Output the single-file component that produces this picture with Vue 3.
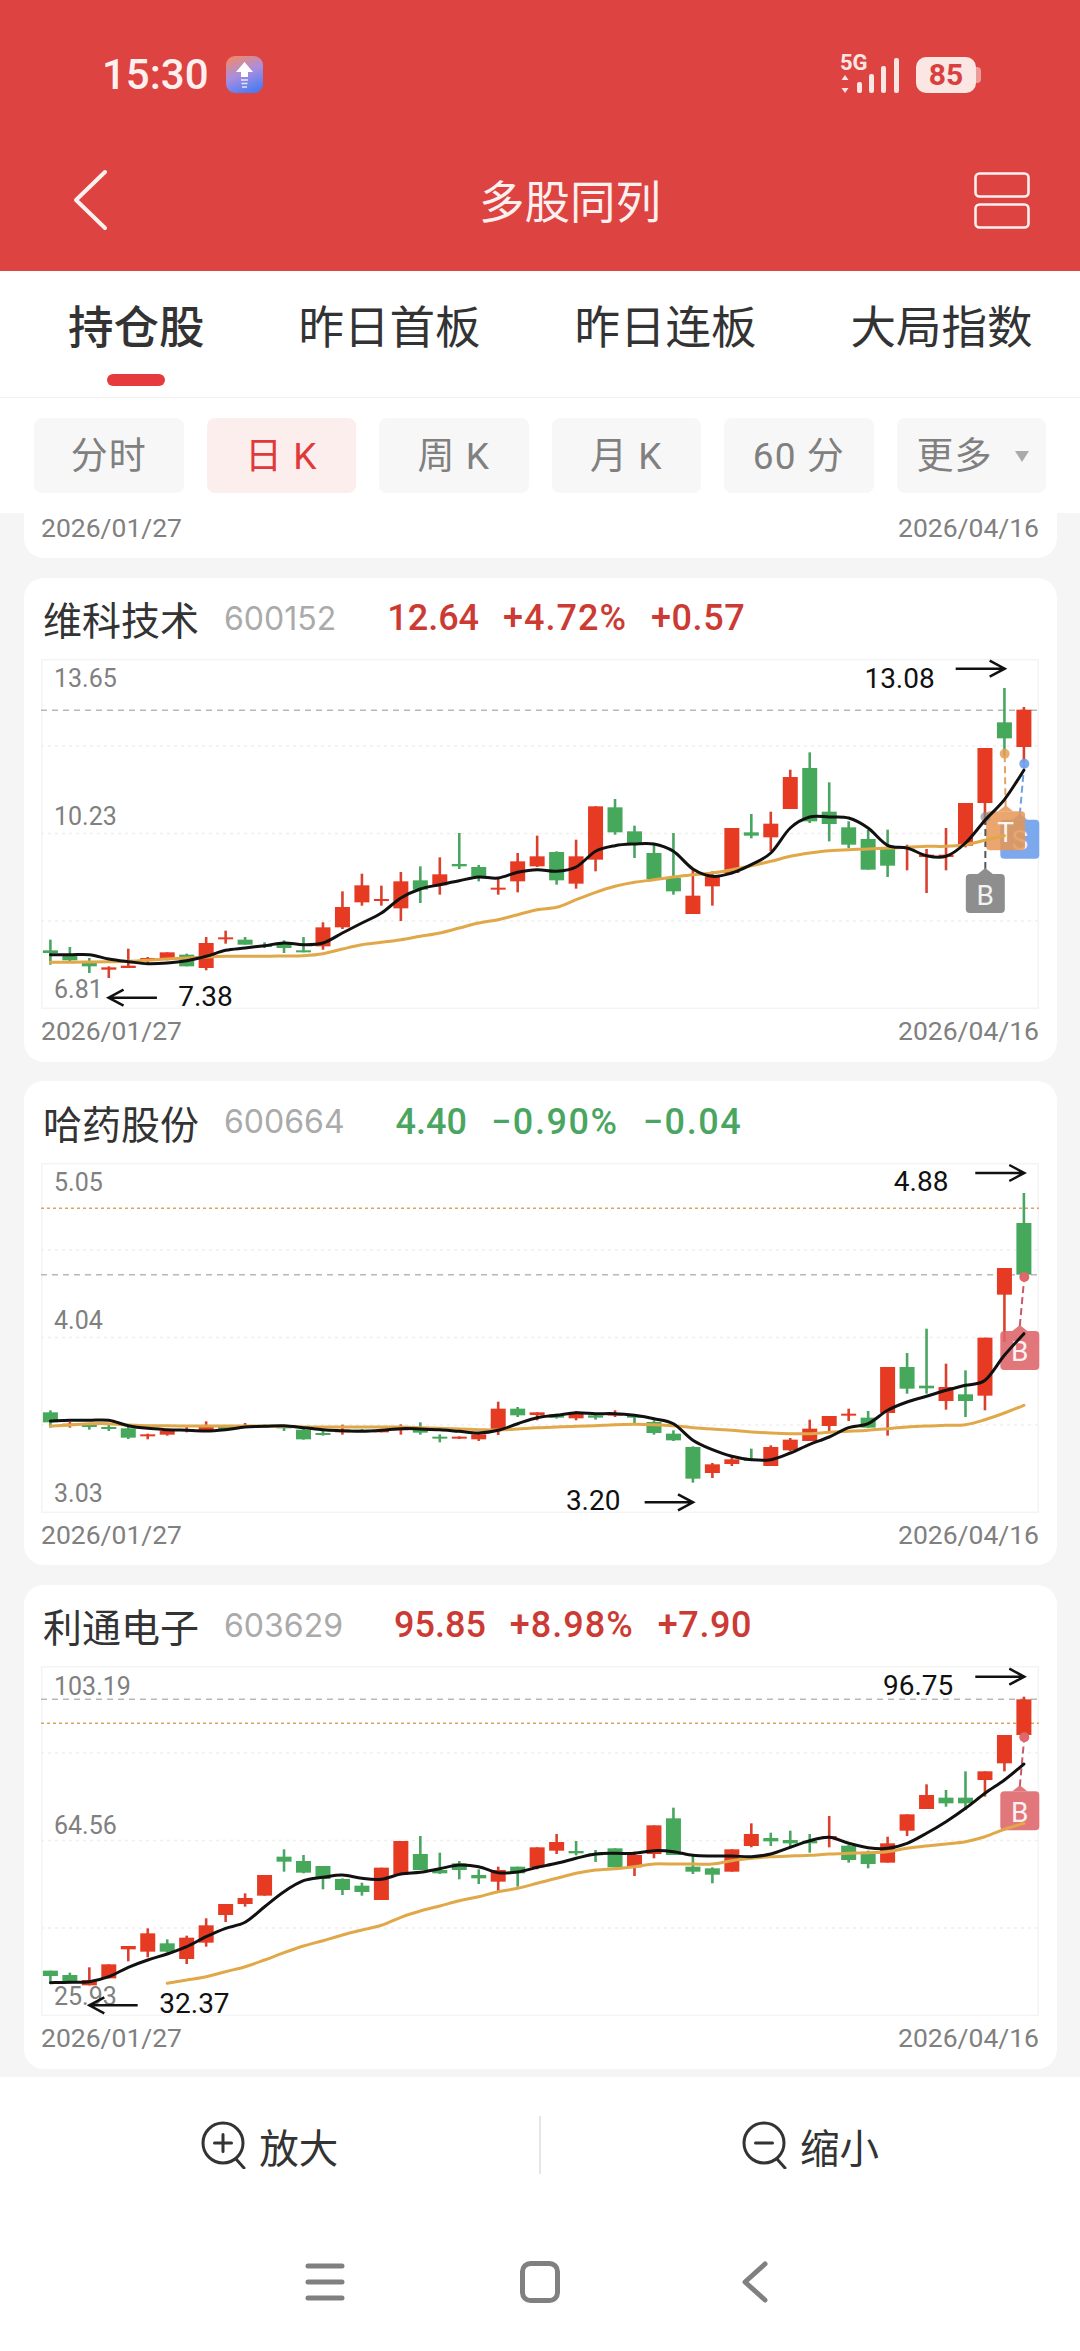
<script setup>
// chart data was read off the screenshot, y values are in crop coordinates (3x)
const lx = (z) => z / 2.958 - 21
const rx = (z) => z / 2.958 + 509
const candleX = (i) => 9.4 + 19.47 * i

function smooth(points) {
  let d = `M${points[0][0]} ${points[0][1]}`
  for (let i = 0; i < points.length - 1; i++) {
    const p0 = points[i - 1] || points[i]
    const p1 = points[i]
    const p2 = points[i + 1]
    const p3 = points[i + 2] || p2
    const c1x = p1[0] + (p2[0] - p0[0]) / 6
    const c1y = p1[1] + (p2[1] - p0[1]) / 6
    const c2x = p2[0] - (p3[0] - p1[0]) / 6
    const c2y = p2[1] - (p3[1] - p1[1]) / 6
    d += ` C${c1x.toFixed(1)} ${c1y.toFixed(1)} ${c2x.toFixed(1)} ${c2y.toFixed(1)} ${p2[0].toFixed(1)} ${p2[1].toFixed(1)}`
  }
  return d
}

function arrow(x1, x2, y) {
  const dir = x2 > x1 ? -1 : 1
  return `M${x1} ${y} L${x2} ${y} M${x2 + dir * 15} ${y - 8} L${x2} ${y} L${x2 + dir * 15} ${y + 8}`
}

function buildChart(raw) {
  const y = (z) => z / 3 - raw.offset
  return {
    ...raw,
    key: raw.code,
    grid: [87, 174.5, 262],
    refs: raw.refs.map((r) => ({ ...r, y: y(r.z) })),
    labels: raw.labels.map((l) => ({ text: l[0], y: y(l[1]) })),
    candles: raw.candles.map((c, i) => ({
      cls: c[0] === 'r' ? 'up' : 'down',
      x: candleX(i),
      top: y(c[1]),
      bodyTop: y(c[2]),
      bodyH: Math.max((c[3] - c[2]) / 3, 2),
      bottom: y(c[4])
    })),
    ma5Path: smooth(raw.ma5.map((v, i) => [candleX(i), y(v)])),
    ma10Path: smooth(raw.ma10.map((v, i) => [candleX(i + (raw.ma10Start || 0)), y(v)])),
    notes: raw.notes.map((n) => ({
      text: n.text,
      x: n.x,
      y: y(n.z),
      arrow: arrow(n.from, n.to, y(n.az))
    })),
    pins: raw.pins.map((p) => {
      const px = p.x
      const py = y(p.z)
      return {
        ...p,
        px,
        py,
        tip: `M${px + 12} ${py} L${px + 19.5} ${py - 6} L${px + 27} ${py} Z`,
        link: `M${px + 19.5} ${py - 5} L${p.toX} ${y(p.toZ)}`,
        dotY: y(p.toZ)
      }
    })
  }
}

const charts = [
  {
    name: '维科技术', code: '600152', price: '12.64', pct: '+4.72%', chg: '+0.57', trend: 'rise',
    offset: 79.33,
    refs: [{ z: 392, cls: 'ref-gray' }],
    labels: [['13.65', 295], ['10.23', 710], ['6.81', 1230]],
    candles: [
      ['g', 1080, 1112, 1120, 1155], ['g', 1102, 1125, 1142, 1145], ['g', 1135, 1150, 1160, 1180], ['r', 1160, 1163, 1170, 1195],
      ['r', 1107, 1158, 1165, 1165], ['r', 1132, 1135, 1140, 1150], ['r', 1118, 1118, 1140, 1142], ['g', 1122, 1125, 1160, 1160],
      ['r', 1072, 1090, 1165, 1172], ['r', 1053, 1073, 1079, 1092], ['g', 1072, 1080, 1095, 1095], ['g', 1088, 1096, 1100, 1105],
      ['g', 1082, 1092, 1105, 1120], ['g', 1072, 1112, 1116, 1118], ['r', 1028, 1043, 1100, 1110], ['r', 935, 982, 1043, 1048],
      ['r', 882, 917, 968, 978], ['r', 918, 958, 964, 978], ['r', 877, 905, 986, 1024], ['g', 860, 902, 930, 970],
      ['r', 833, 884, 917, 945], ['g', 760, 853, 860, 868], ['g', 856, 862, 890, 905], ['r', 895, 924, 928, 945],
      ['r', 820, 845, 905, 938], ['r', 768, 830, 860, 862], ['g', 815, 817, 902, 915], ['r', 780, 830, 912, 927],
      ['r', 680, 680, 840, 875], ['g', 658, 683, 758, 765], ['g', 738, 755, 790, 835], ['g', 795, 820, 898, 900],
      ['g', 760, 895, 935, 945], ['r', 870, 948, 1003, 1003], ['r', 875, 890, 920, 978], ['r', 745, 745, 880, 880],
      ['g', 703, 758, 768, 776], ['r', 696, 732, 773, 815], ['r', 570, 592, 688, 688], ['g', 518, 565, 725, 730],
      ['g', 608, 696, 733, 785], ['g', 725, 743, 795, 805], ['g', 750, 778, 870, 870], ['g', 750, 808, 858, 892],
      ['r', 795, 800, 806, 872], ['r', 808, 825, 832, 940], ['r', 745, 825, 832, 872], ['r', 670, 670, 798, 803],
      ['r', 505, 505, 670, 735], ['g', 325, 428, 476, 530], ['r', 382, 390, 502, 550]
    ],
    ma5: [1125, 1125, 1125, 1138, 1146, 1152, 1150, 1143, 1130, 1112, 1105, 1098, 1090, 1095, 1090, 1060, 1030, 1000, 955, 928, 915, 903, 892, 895, 878, 870, 875, 862, 815, 798, 793, 793, 815, 868, 890, 880, 855, 820, 745, 712, 712, 715, 745, 797, 805, 828, 830, 790, 722, 660, 572],
    ma10: [1148, 1148, 1147, 1146, 1145, 1142, 1138, 1135, 1132, 1130, 1130, 1130, 1129, 1128, 1122, 1108, 1095, 1088, 1080, 1070, 1060, 1045, 1030, 1020, 1005, 990, 983, 960, 938, 920, 908, 900, 892, 885, 880, 870, 858, 845, 830, 820, 813, 810, 808, 805, 803, 800, 800, 795, 782, 768],
    notes: [
      { text: '13.08', x: rx(930), z: 295, from: rx(1200), to: rx(1345), az: 267 },
      { text: '7.38', x: lx(468), z: 1250, from: lx(405), to: lx(262), az: 1254 }
    ],
    pins: [
      { text: 'S', cls: 'pin-blue', x: rx(1332), z: 720, toX: rx(1403), toZ: 552 },
      { text: 'T', cls: 'pin-orange', x: rx(1290), z: 695, toX: rx(1345), toZ: 522 },
      { text: 'B', cls: 'pin-gray', x: rx(1230), z: 883, toX: rx(1288), toZ: 712 }
    ]
  },
  {
    name: '哈药股份', code: '600664', price: '4.40', pct: '−0.90%', chg: '−0.04', trend: 'fall',
    offset: 82.67,
    refs: [{ z: 384, cls: 'ref-gold' }, { z: 583, cls: 'ref-gray' }],
    labels: [['5.05', 308], ['4.04', 722], ['3.03', 1240]],
    candles: [
      ['g', 990, 996, 1026, 1042], ['r', 1025, 1030, 1035, 1042], ['g', 1028, 1034, 1037, 1048], ['g', 1030, 1040, 1044, 1052],
      ['g', 1040, 1044, 1072, 1076], ['r', 1060, 1062, 1066, 1077], ['r', 1050, 1052, 1063, 1066], ['r', 1040, 1046, 1052, 1056],
      ['r', 1023, 1040, 1050, 1052], ['g', 1038, 1040, 1044, 1046], ['r', 1028, 1036, 1038, 1040], ['g', 1033, 1035, 1040, 1042],
      ['g', 1038, 1038, 1042, 1052], ['g', 1045, 1048, 1077, 1078], ['g', 1052, 1058, 1062, 1066], ['r', 1033, 1048, 1056, 1063],
      ['g', 1046, 1048, 1052, 1054], ['r', 1046, 1050, 1053, 1056], ['r', 1032, 1044, 1050, 1063], ['g', 1026, 1045, 1057, 1063],
      ['g', 1062, 1069, 1074, 1086], ['r', 1068, 1069, 1074, 1076], ['r', 1060, 1062, 1077, 1082], ['r', 964, 985, 1050, 1064],
      ['g', 980, 985, 1005, 1010], ['r', 996, 996, 1004, 1020], ['g', 1000, 1002, 1012, 1015], ['r', 992, 1000, 1014, 1020],
      ['g', 1000, 1005, 1012, 1018], ['r', 990, 1000, 1006, 1010], ['g', 1005, 1006, 1012, 1028], ['g', 1020, 1025, 1058, 1063],
      ['g', 1050, 1060, 1080, 1082], ['g', 1098, 1100, 1195, 1207], ['r', 1148, 1152, 1178, 1193], ['r', 1128, 1137, 1151, 1157],
      ['g', 1105, 1136, 1140, 1142], ['r', 1095, 1100, 1157, 1157], ['r', 1073, 1078, 1110, 1112], ['r', 1018, 1045, 1082, 1082],
      ['r', 1007, 1007, 1037, 1052], ['r', 985, 1000, 1006, 1022], ['g', 992, 1012, 1042, 1042], ['r', 860, 860, 998, 1066],
      ['g', 818, 860, 925, 940], ['g', 745, 916, 924, 940], ['r', 850, 920, 962, 988], ['g', 870, 942, 962, 1010],
      ['r', 772, 772, 946, 990], ['r', 563, 563, 643, 785], ['g', 338, 428, 583, 585]
    ],
    ma5: [1022, 1020, 1020, 1020, 1036, 1044, 1048, 1050, 1052, 1048, 1040, 1038, 1036, 1042, 1048, 1051, 1053, 1050, 1045, 1046, 1048, 1053, 1058, 1050, 1030, 1012, 1005, 997, 1000, 1000, 1005, 1015, 1030, 1080, 1108, 1128, 1138, 1138, 1118, 1092, 1070, 1042, 1030, 990, 965, 948, 930, 915, 900, 825, 760],
    ma10: [1037, 1034, 1030, 1030, 1034, 1036, 1036, 1037, 1037, 1037, 1037, 1037, 1038, 1040, 1040, 1040, 1040, 1040, 1040, 1042, 1044, 1046, 1048, 1049, 1046, 1042, 1040, 1038, 1036, 1033, 1032, 1033, 1036, 1042, 1046, 1050, 1055, 1058, 1060, 1060, 1056, 1053, 1050, 1045, 1040, 1037, 1035, 1033, 1018, 998, 975],
    notes: [
      { text: '4.88', x: rx(1017), z: 305, from: rx(1258), to: rx(1403), az: 278 },
      { text: '3.20', x: rx(47), z: 1260, from: rx(280), to: rx(423), az: 1266 }
    ],
    pins: [{ text: 'B', cls: 'pin-red', x: rx(1332), z: 752, toX: rx(1403), toZ: 590 }]
  },
  {
    name: '利通电子', code: '603629', price: '95.85', pct: '+8.98%', chg: '+7.90', trend: 'rise',
    offset: 86,
    refs: [{ z: 358, cls: 'ref-gray' }, { z: 430, cls: 'ref-gold' }],
    labels: [['103.19', 318], ['64.56', 735], ['25.93', 1250]],
    candles: [
      ['g', 1172, 1172, 1188, 1208], ['g', 1178, 1185, 1205, 1210], ['r', 1162, 1200, 1216, 1216], ['r', 1153, 1153, 1195, 1195],
      ['r', 1098, 1098, 1108, 1144], ['r', 1045, 1060, 1115, 1132], ['g', 1078, 1090, 1115, 1118], ['r', 1067, 1073, 1137, 1152],
      ['r', 1015, 1036, 1088, 1100], ['r', 972, 972, 1005, 1026], ['r', 940, 954, 972, 980], ['r', 885, 885, 947, 947],
      ['g', 808, 830, 845, 875], ['g', 825, 843, 878, 880], ['g', 858, 858, 897, 928], ['g', 895, 897, 930, 945],
      ['g', 908, 917, 936, 947], ['r', 863, 863, 960, 960], ['r', 783, 783, 885, 885], ['g', 768, 822, 870, 870],
      ['g', 818, 870, 880, 882], ['g', 843, 850, 870, 898], ['g', 868, 885, 895, 912], ['r', 860, 870, 905, 935],
      ['g', 860, 860, 880, 920], ['r', 802, 802, 862, 868], ['r', 762, 786, 812, 822], ['g', 783, 813, 820, 826],
      ['g', 810, 820, 826, 846], ['g', 805, 805, 862, 862], ['r', 815, 825, 862, 888], ['r', 736, 736, 822, 835],
      ['g', 683, 715, 825, 825], ['g', 825, 860, 875, 882], ['g', 862, 865, 884, 910], ['r', 808, 808, 875, 875],
      ['r', 730, 762, 798, 802], ['g', 758, 774, 784, 798], ['g', 752, 780, 790, 802], ['g', 762, 782, 790, 818],
      ['r', 708, 768, 776, 802], ['g', 795, 797, 840, 848], ['g', 812, 822, 852, 865], ['r', 770, 790, 848, 848],
      ['r', 703, 703, 752, 768], ['r', 613, 645, 687, 687], ['g', 630, 653, 670, 680], ['g', 574, 653, 670, 690],
      ['r', 574, 574, 600, 650], ['r', 465, 465, 550, 574], ['r', 350, 358, 465, 480]
    ],
    ma5: [1208, 1207, 1205, 1190, 1162, 1140, 1122, 1100, 1070, 1045, 1027, 980, 935, 902, 892, 885, 895, 898, 882, 877, 866, 855, 860, 878, 876, 862, 850, 835, 822, 820, 820, 812, 815, 826, 828, 828, 830, 822, 802, 782, 772, 790, 803, 805, 790, 760, 725, 685, 640, 600, 552],
    ma10Start: 6,
    ma10: [1210, 1200, 1190, 1175, 1160, 1140, 1118, 1098, 1082, 1065, 1050, 1036, 1012, 993, 978, 962, 950, 935, 925, 910, 895, 880, 870, 866, 860, 852, 852, 852, 852, 842, 835, 830, 828, 826, 822, 820, 818, 815, 805, 798, 792, 785, 770, 748, 730],
    notes: [
      { text: '96.75', x: rx(985), z: 315, from: rx(1258), to: rx(1403), az: 290 },
      { text: '32.37', x: lx(412), z: 1270, from: lx(348), to: lx(205), az: 1276 }
    ],
    pins: [{ text: 'B', cls: 'pin-red', x: rx(1332), z: 634, toX: rx(1403), toZ: 472 }]
  }
].map(buildChart)

const tabs = ['持仓股', '昨日首板', '昨日连板', '大局指数']
const periods = ['分时', '日 K', '周 K', '月 K', '60 分']
</script>

<template>
  <div class="page">
    <header class="top">
      <div class="status">
        <span class="time">15:30</span>
        <svg class="app-icon" width="37" height="37" viewBox="0 0 37 37">
          <defs>
            <linearGradient id="appGrad" x1="0.2" y1="0" x2="0.6" y2="1">
              <stop offset="0" stop-color="#f08a6a" />
              <stop offset="0.5" stop-color="#a98ee0" />
              <stop offset="1" stop-color="#4f7df0" />
            </linearGradient>
          </defs>
          <rect width="37" height="37" rx="9" fill="url(#appGrad)" />
          <path d="M18.5 6 L27 16 L22 16 L22 21 L15 21 L15 16 L10 16 Z" fill="#fff" />
          <path d="M15 24 H22 M15.5 27.5 H21.5 M16 31 H21" stroke="#fff" stroke-width="1.6" opacity="0.8" />
        </svg>
        <div class="status-right">
          <svg class="signal" width="62" height="42" viewBox="0 0 62 42">
            <text x="0" y="16" class="net">5G</text>
            <path d="M5 21 L8.5 26 H1.5 Z M5 39 L1.5 34 H8.5 Z" fill="#fbe6e4" />
            <rect x="17" y="28" width="5" height="11" rx="2" fill="#fbe6e4" />
            <rect x="29" y="20" width="5" height="19" rx="2" fill="#fbe6e4" />
            <rect x="41" y="12" width="5" height="27" rx="2" fill="#fbe6e4" />
            <rect x="54" y="4" width="5" height="35" rx="2" fill="#fbe6e4" />
          </svg>
          <div class="battery">85</div>
          <div class="battery-nub"></div>
        </div>
      </div>
      <div class="title-row">
        <svg class="back" width="36" height="62" viewBox="0 0 36 62">
          <path d="M33 3 L4 31 L33 59" fill="none" stroke="#fdf0ef" stroke-width="4" stroke-linecap="round" stroke-linejoin="round" />
        </svg>
        <h1 class="title">多股同列</h1>
        <svg class="layout-icon" width="56" height="57" viewBox="0 0 56 57">
          <rect x="1.5" y="1.5" width="53" height="23" rx="4" fill="none" stroke="#fdf0ef" stroke-width="2.6" />
          <rect x="1.5" y="32.5" width="53" height="23" rx="4" fill="none" stroke="#fdf0ef" stroke-width="2.6" />
        </svg>
      </div>
    </header>

    <nav class="tabs">
      <div v-for="(tab, i) in tabs" :key="tab" class="tab" :class="{ active: i === 0 }">{{ tab }}</div>
    </nav>

    <div class="periods">
      <div v-for="p in periods" :key="p" class="period" :class="{ active: p === '日 K' }">{{ p }}</div>
      <div class="period more">更多<span class="caret"></span></div>
    </div>

    <main class="list">
      <section class="card card-cut">
        <div class="dates"><span>2026/01/27</span><span>2026/04/16</span></div>
      </section>

      <section v-for="c in charts" :key="c.key" class="card">
        <div class="head">
          <span class="name">{{ c.name }}</span>
          <span class="code">{{ c.code }}</span>
          <div class="quote" :class="c.trend">
            <span>{{ c.price }}</span>
            <span class="pct">{{ c.pct }}</span>
            <span class="chg">{{ c.chg }}</span>
          </div>
        </div>

        <svg class="chart" width="998" height="350" viewBox="0 0 998 350">
          <rect x="0.75" y="0.75" width="996.5" height="348.5" class="frame" />
          <line v-for="g in c.grid" :key="g" x1="0" x2="998" :y1="g" :y2="g" class="grid" />
          <line v-for="r in c.refs" :key="r.z" x1="0" x2="998" :y1="r.y" :y2="r.y" :class="r.cls" />

          <text v-for="l in c.labels" :key="l.text" x="13" :y="l.y" class="axis">{{ l.text }}</text>

          <g v-for="(k, i) in c.candles" :key="i" :class="k.cls">
            <line :x1="k.x" :x2="k.x" :y1="k.top" :y2="k.bottom" class="wick" />
            <rect :x="k.x - 7.5" :y="k.bodyTop" width="15" :height="k.bodyH" class="body" />
          </g>

          <g v-for="p in c.pins" :key="p.text" :class="p.cls">
            <path :d="p.link" class="pin-link" />
            <circle :cx="p.toX" :cy="p.dotY" r="5" class="pin-dot" />
            <path :d="p.tip" class="pin-box" />
            <rect :x="p.px" :y="p.py" width="39" height="39" rx="4" class="pin-box" />
            <text :x="p.px + 19.5" :y="p.py + 21" class="pin-text">{{ p.text }}</text>
          </g>

          <path :d="c.ma10Path" class="ma10" />
          <path :d="c.ma5Path" class="ma5" />

          <g v-for="n in c.notes" :key="n.text">
            <text :x="n.x" :y="n.y" class="note">{{ n.text }}</text>
            <path :d="n.arrow" class="note-arrow" />
          </g>
        </svg>

        <div class="dates"><span>2026/01/27</span><span>2026/04/16</span></div>
      </section>
    </main>

    <footer class="bottom">
      <div class="zoom-bar">
        <div class="zoom-btn">
          <svg width="46" height="48" viewBox="0 0 46 48">
            <circle cx="22" cy="22" r="20" fill="none" stroke="#333" stroke-width="3" />
            <path d="M35 38 L43 47 M13.5 22 H30.5 M22 13.5 V30.5" fill="none" stroke="#333" stroke-width="3" stroke-linecap="round" />
          </svg>
          <span>放大</span>
        </div>
        <div class="zoom-line"></div>
        <div class="zoom-btn">
          <svg width="46" height="48" viewBox="0 0 46 48">
            <circle cx="22" cy="22" r="20" fill="none" stroke="#333" stroke-width="3" />
            <path d="M35 38 L43 47 M13.5 22 H30.5" fill="none" stroke="#333" stroke-width="3" stroke-linecap="round" />
          </svg>
          <span>缩小</span>
        </div>
      </div>
      <div class="sys-nav">
        <svg width="40" height="40" viewBox="0 0 40 40">
          <path d="M3 4 H37 M3 20 H37 M3 36 H37" stroke="#808080" stroke-width="5" stroke-linecap="round" />
        </svg>
        <svg width="40" height="42" viewBox="0 0 40 42">
          <rect x="2.5" y="2.5" width="35" height="37" rx="8" fill="none" stroke="#808080" stroke-width="5" />
        </svg>
        <svg width="28" height="42" viewBox="0 0 28 42">
          <path d="M24 3 L4 21 L24 39" fill="none" stroke="#808080" stroke-width="5" stroke-linecap="round" stroke-linejoin="round" />
        </svg>
      </div>
    </footer>
  </div>
</template>

<style>
html,
body {
  margin: 0;
  background: #fff;
}
</style>

<style scoped>
.page {
  width: 1080px;
  height: 2351px;
  overflow: hidden;
  display: flex;
  flex-direction: column;
  background: #fff;
  font-family: Roboto, "Noto Sans CJK SC", sans-serif;
  color: #333;
}

.top {
  height: 271px;
  flex: none;
  background: #dd4341;
  color: #fdf0ef;
}

.status {
  height: 149px;
  padding: 0 99px 0 102px;
  box-sizing: border-box;
  display: flex;
  align-items: center;
}

.time {
  font-size: 42px;
  font-weight: 500;
}

.app-icon {
  margin-left: 17px;
}

.status-right {
  margin-left: auto;
  display: flex;
  align-items: center;
}

.signal {
  overflow: visible;
}

.net {
  font-family: Roboto, sans-serif;
  font-size: 22px;
  font-weight: 700;
  fill: #fbe6e4;
}

.battery {
  width: 60px;
  height: 36px;
  margin-left: 14px;
  border-radius: 10px;
  background: #fbe6e4;
  color: #d8403d;
  font-size: 30px;
  font-weight: 700;
  line-height: 36px;
  text-align: center;
}

.battery-nub {
  width: 5px;
  height: 16px;
  border-radius: 0 4px 4px 0;
  background: #ee9a96;
}

.title-row {
  display: flex;
  align-items: center;
  height: 62px;
  margin-top: 20px;
  padding: 0 50px 0 72px;
}

.title {
  flex: 1;
  margin: 0 0 2px 58px;
  font-size: 45.5px;
  font-weight: 400;
  text-align: center;
}

.tabs {
  height: 126px;
  flex: none;
  display: flex;
  gap: 94px;
  padding-left: 68px;
  box-sizing: content-box;
  border-bottom: 1px solid #f2f2f2;
}

.tab {
  position: relative;
  font-size: 45.5px;
  line-height: 115px;
  color: #333;
}

.tab.active {
  font-weight: 500;
}

.tab.active::after {
  content: "";
  position: absolute;
  left: 39px;
  top: 103px;
  width: 58px;
  height: 12px;
  border-radius: 6px;
  background: #e63b3e;
}

.periods {
  height: 115px;
  flex: none;
  box-sizing: border-box;
  padding: 20px 0 0 34px;
  display: flex;
  gap: 23px;
}

.period {
  width: 149.5px;
  height: 75px;
  border-radius: 8px;
  background: #f7f7f7;
  color: #808080;
  font-size: 37px;
  line-height: 78px;
  letter-spacing: 1px;
  text-align: center;
}

.period.active {
  background: #fdeeee;
  color: #e0393a;
}

.period.more {
  position: relative;
  text-align: left;
  padding-left: 20px;
  box-sizing: border-box;
}

.caret {
  position: absolute;
  right: 17px;
  top: 33px;
  width: 0;
  height: 0;
  border-left: 7px solid transparent;
  border-right: 7px solid transparent;
  border-top: 11px solid #aaa;
}

.list {
  height: 1564px;
  flex: none;
  box-sizing: border-box;
  background: #f5f5f5;
  overflow: hidden;
  padding: 0 23px 0 24px;
  display: flex;
  flex-direction: column;
  gap: 19.5px;
}

.card {
  height: 484px;
  flex: none;
  box-sizing: border-box;
  border-radius: 20px;
  background: #fff;
  padding: 0 18px 0 17px;
}

.card-cut {
  height: 45px;
  border-radius: 0 0 20px 20px;
}

.card-cut .dates {
  height: 30px;
  line-height: 30px;
}

.head {
  height: 81.5px;
  display: flex;
  align-items: center;
  padding-left: 2px;
  box-sizing: border-box;
}

.name {
  font-size: 39px;
  color: #333;
  width: 156px;
  white-space: nowrap;
}

.code {
  font-family: Inter, sans-serif;
  font-size: 32px;
  color: #aaa;
  margin-left: 25px;
}

.quote {
  display: flex;
  gap: 24px;
  margin-left: 51px;
  font-size: 36px;
  font-weight: 500;
}

.quote.rise {
  color: #cc3b33;
}

.quote.fall {
  color: #4aa562;
}

.pct {
  letter-spacing: 1px;
}

.chg {
  letter-spacing: 0.6px;
}

.quote.fall .pct,
.quote.fall .chg {
  letter-spacing: 1.6px;
}

.chart {
  display: block;
  overflow: visible;
}

.frame {
  fill: none;
  stroke: #f4f4f4;
  stroke-width: 1.5;
}

.grid {
  stroke: #efefef;
  stroke-width: 1.5;
  stroke-dasharray: 3 4;
}

.ref-gray {
  stroke: #b8b8b8;
  stroke-width: 1.5;
  stroke-dasharray: 6 5;
}

.ref-gold {
  stroke: #d9a460;
  stroke-width: 1.5;
  stroke-dasharray: 3 3;
}

.axis {
  font-size: 25px;
  fill: #808080;
  dominant-baseline: central;
}

.up .wick {
  stroke: #d9402e;
}

.up .body {
  fill: #e63a22;
}

.down .wick {
  stroke: #4aa562;
}

.down .body {
  fill: #46a85a;
}

.wick {
  stroke-width: 2.6;
}

.ma5 {
  fill: none;
  stroke: #111;
  stroke-width: 3;
  stroke-linecap: round;
}

.ma10 {
  fill: none;
  stroke: #e0a848;
  stroke-width: 3;
  stroke-linecap: round;
}

.note {
  font-size: 28px;
  fill: #111;
  dominant-baseline: central;
}

.note-arrow {
  fill: none;
  stroke: #111;
  stroke-width: 2.5;
}

.pin-link {
  fill: none;
  stroke-width: 2;
  stroke-dasharray: 7 4;
}

.pin-text {
  font-size: 28px;
  fill: #fff;
  text-anchor: middle;
  dominant-baseline: central;
  opacity: 0.9;
}

.pin-gray .pin-box,
.pin-gray .pin-dot {
  fill: #8e8e8e;
}

.pin-gray .pin-link {
  stroke: #555;
}

.pin-gray .pin-dot {
  opacity: 0.7;
}

.pin-orange .pin-box {
  fill: rgba(230, 150, 85, 0.85);
}

.pin-orange .pin-dot {
  fill: rgba(230, 160, 90, 0.85);
}

.pin-orange .pin-link {
  stroke: #e6a060;
}

.pin-blue .pin-box,
.pin-blue .pin-dot {
  fill: rgba(110, 160, 235, 0.9);
}

.pin-blue .pin-link {
  stroke: #6ea0eb;
}

.pin-red .pin-box {
  fill: rgba(222, 100, 105, 0.88);
}

.pin-red .pin-dot {
  fill: #e0686c;
}

.pin-red .pin-link {
  stroke: #c85a68;
}

.dates {
  display: flex;
  justify-content: space-between;
  height: 44px;
  line-height: 44px;
  font-size: 26.5px;
  color: #808080;
}

.bottom {
  flex: 1;
  background: #fff;
}

.zoom-bar {
  height: 136px;
  display: flex;
  align-items: center;
}

.zoom-btn {
  flex: 1;
  display: flex;
  align-items: center;
  justify-content: center;
  gap: 12px;
  font-size: 39.5px;
  color: #333;
}

.zoom-line {
  width: 1.5px;
  height: 58px;
  background: #e5e5e5;
}

.sys-nav {
  height: 138px;
  display: grid;
  grid-template-columns: repeat(3, 215px);
  justify-content: center;
  justify-items: center;
  align-items: center;
}
</style>
